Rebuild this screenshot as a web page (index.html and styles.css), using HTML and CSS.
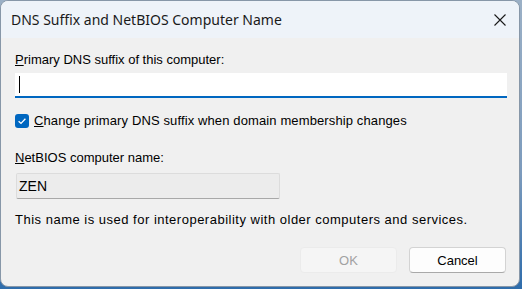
FILE: index.html
```html
<!DOCTYPE html>
<html>
<head>
	<title>DNS Suffix and NetBIOS Computer Name</title>
	<link rel="stylesheet" href="styles.css">
</head>
<body>
	<div class="window">
		<div class="titlebar">
			<div class="title">DNS Suffix and NetBIOS Computer Name</div>
			<div class="close">
				<svg width="12" height="12" viewBox="0 0 12 12">
					<path d="M0.5 0.5 L11.5 11.5 M11.5 0.5 L0.5 11.5" stroke="#1a1a1a" stroke-width="1.1" fill="none"/>
				</svg>
			</div>
		</div>

		<div class="content">
			<div class="label"><u>P</u>rimary DNS suffix of this computer:</div>
			<div class="textbox"><span class="caret"></span></div>

			<div class="check_row">
				<span class="checkbox">
					<svg width="14" height="14" viewBox="0 0 14 14">
						<path d="M3.6 7.2 L6 9.4 L10.4 4.8" stroke="#fff" stroke-width="1.3" fill="none"/>
					</svg>
				</span>
				<span class="check_label"><u>C</u>hange primary DNS suffix when domain membership changes</span>
			</div>

			<div class="label netbios_label"><u>N</u>etBIOS computer name:</div>
			<div class="readonly_box">ZEN</div>

			<div class="note">This name is used for interoperability with older computers and services.</div>

			<div class="buttons">
				<button class="button" disabled>OK</button>
				<button class="button default">Cancel</button>
			</div>
		</div>
	</div>
</body>
</html>
```

FILE: styles.css
```css
html, body {
	margin: 0;
	height: 289px;
	overflow: hidden;
}
body {
	background: linear-gradient(to bottom, #9bb0c6 0%, #7c9bbd 60%, #2e6cab 100%);
}
.window {
	width: 518px;
	height: 285px;
	border: 1px solid #8797a8;
	border-radius: 8px;
	background: #f0f0f0;
	overflow: hidden;
	font-family: "Liberation Sans", Arial, sans-serif;
	color: #000;
}
.titlebar {
	height: 37px;
	background: #eef3f9;
	display: flex;
	align-items: center;
	justify-content: space-between;
}
.title {
	font-family: "Noto Sans", sans-serif;
	font-size: 14px;
	color: #1a1a1a;
	margin-left: 10px;
	margin-top: 0px;
}
.close {
	width: 12px;
	height: 12px;
	margin-right: 13px;
	display: flex;
}
.content {
	padding: 15px 12px 0 14px;
	font-size: 13px;
}
.label {
	line-height: 14px;
	height: 14px;
}
.textbox {
	margin-top: 6px;
	height: 23px;
	background: #fff;
	border-bottom: 2px solid #0067c0;
	display: flex;
	align-items: center;
	padding-left: 4px;
}
.caret {
	width: 1px;
	height: 17px;
	background: #000;
}
.check_row {
	margin-top: 14px;
	height: 18px;
	display: flex;
	align-items: center;
}
.checkbox {
	width: 14px;
	height: 14px;
	border-radius: 3px;
	background: #0067c0;
	display: flex;
}
.check_label {
	margin-left: 5px;
	line-height: 14px;
	letter-spacing: 0.12px;
}
.netbios_label {
	margin-top: 21px;
}
.readonly_box {
	margin-top: 8px;
	margin-left: 1px;
	width: 260px;
	height: 24px;
	line-height: 24px;
	padding-left: 2px;
	background: #ececec;
	border: 1px solid #dcdcdc;
	border-bottom-color: #a8a8a8;
	border-radius: 2px;
	box-sizing: content-box;
	font-size: 14px;
}
.note {
	margin-top: 14px;
	line-height: 14px;
	letter-spacing: 0.5px;
}
.buttons {
	margin-top: 20px;
	display: flex;
	justify-content: flex-end;
	gap: 12px;
	padding-right: 1px;
}
.button {
	width: 97px;
	height: 26px;
	font-family: "Liberation Sans", Arial, sans-serif;
	font-size: 13px;
	border-radius: 4px;
	border: 1px solid #d3d3d3;
	background: #fdfdfd;
	color: #000;
}
.button:disabled {
	background: #f5f5f5;
	border-color: #ebebeb;
	color: #a2a2a2;
}
.default {
	border-bottom-color: #a9a9a9;
}
```
